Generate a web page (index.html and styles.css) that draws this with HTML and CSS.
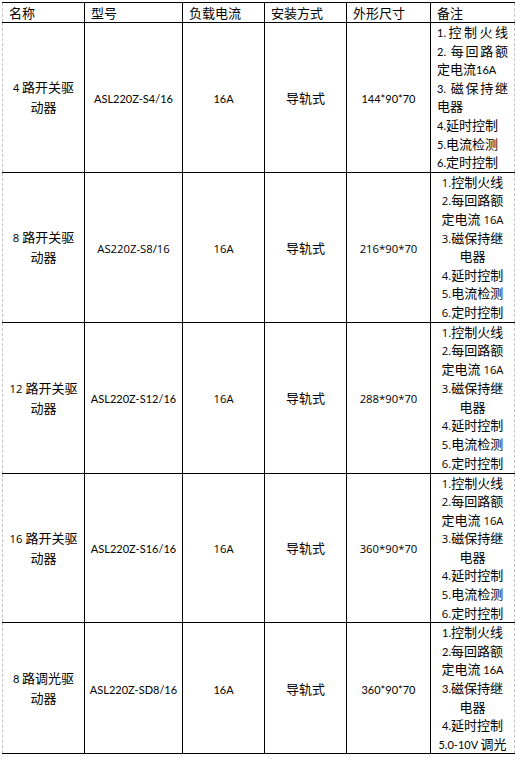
FILE: index.html
```html
<!DOCTYPE html>
<html lang="zh-CN">
<head>
<meta charset="utf-8">
<title>开关驱动器规格</title>
<link rel="stylesheet" href="styles.css">
</head>
<body>
<table class="spec">
  <colgroup>
    <col class="w1"><col class="w2"><col class="w3"><col class="w4"><col class="w5"><col class="w6">
  </colgroup>
  <thead>
    <tr><th>名称</th><th>型号</th><th>负载电流</th><th>安装方式</th><th>外形尺寸</th><th>备注</th></tr>
  </thead>
  <tbody>
    <tr>
      <td class="name"><span class="c">4 </span>路开关驱<br>动器</td>
      <td><span class="c">ASL220Z-S4/16</span></td>
      <td><span class="c">16A</span></td>
      <td>导轨式</td>
      <td><span class="c">144*90*70</span></td>
      <td class="note just">
        <span class="l j"><span class="c">1.</span>控制火线</span>
        <span class="l j"><span class="c">2.</span> 每回路额</span>
        <span class="l">定电流<span class="c">16A</span></span>
        <span class="l j"><span class="c">3.</span> 磁保持继</span>
        <span class="l">电器</span>
        <span class="l"><span class="c">4.</span>延时控制</span>
        <span class="l"><span class="c">5.</span>电流检测</span>
        <span class="l"><span class="c">6.</span>定时控制</span>
      </td>
    </tr>
    <tr>
      <td class="name"><span class="y">8 </span>路开关驱<br>动器</td>
      <td><span class="y">AS220Z-S8/16</span></td>
      <td><span class="y">16A</span></td>
      <td>导轨式</td>
      <td><span class="y">216*90*70</span></td>
      <td class="note">
        <span class="l"><span class="y">1.</span>控制火线</span>
        <span class="l"><span class="y">2.</span>每回路额</span>
        <span class="l">定电流 <span class="y">16A</span></span>
        <span class="l"><span class="y">3.</span>磁保持继</span>
        <span class="l">电器</span>
        <span class="l"><span class="y">4.</span>延时控制</span>
        <span class="l"><span class="y">5.</span>电流检测</span>
        <span class="l"><span class="y">6.</span>定时控制</span>
      </td>
    </tr>
    <tr class="tall">
      <td class="name"><span class="y">12 </span>路开关驱<br>动器</td>
      <td><span class="c">ASL220Z-S12/16</span></td>
      <td><span class="y">16A</span></td>
      <td>导轨式</td>
      <td><span class="y">288*90*70</span></td>
      <td class="note">
        <span class="l"><span class="y">1.</span>控制火线</span>
        <span class="l"><span class="y">2.</span>每回路额</span>
        <span class="l">定电流 <span class="y">16A</span></span>
        <span class="l"><span class="y">3.</span>磁保持继</span>
        <span class="l">电器</span>
        <span class="l"><span class="y">4.</span>延时控制</span>
        <span class="l"><span class="y">5.</span>电流检测</span>
        <span class="l"><span class="y">6.</span>定时控制</span>
      </td>
    </tr>
    <tr>
      <td class="name"><span class="y">16 </span>路开关驱<br>动器</td>
      <td><span class="c">ASL220Z-S16/16</span></td>
      <td><span class="y">16A</span></td>
      <td>导轨式</td>
      <td><span class="y">360*90*70</span></td>
      <td class="note">
        <span class="l"><span class="y">1.</span>控制火线</span>
        <span class="l"><span class="y">2.</span>每回路额</span>
        <span class="l">定电流 <span class="y">16A</span></span>
        <span class="l"><span class="y">3.</span>磁保持继</span>
        <span class="l">电器</span>
        <span class="l"><span class="y">4.</span>延时控制</span>
        <span class="l"><span class="y">5.</span>电流检测</span>
        <span class="l"><span class="y">6.</span>定时控制</span>
      </td>
    </tr>
    <tr>
      <td class="name"><span class="c">8 </span>路调光驱<br>动器</td>
      <td><span class="c">ASL220Z-SD8/16</span></td>
      <td><span class="c">16A</span></td>
      <td>导轨式</td>
      <td><span class="c">360*90*70</span></td>
      <td class="note">
        <span class="l"><span class="c">1.</span>控制火线</span>
        <span class="l"><span class="c">2.</span>每回路额</span>
        <span class="l">定电流 <span class="c">16A</span></span>
        <span class="l"><span class="c">3.</span>磁保持继</span>
        <span class="l">电器</span>
        <span class="l"><span class="c">4.</span>延时控制</span>
        <span class="l"><span class="c">5.0-10V </span>调光</span>
      </td>
    </tr>
  </tbody>
</table>
</body>
</html>
```

FILE: styles.css
```css
html, body {
  margin: 0;
  padding: 0;
  background: #ffffff;
}

.spec {
  border-collapse: collapse;
  table-layout: fixed;
  width: 513px;
  margin: 2px 0 0 2px;
  font-family: "Noto Sans CJK SC", sans-serif;
  font-size: 13px;
  color: #000000;
}

.w1 { width: 82px; }
.w2 { width: 98px; }
.w3 { width: 82px; }
.w4 { width: 82px; }
.w5 { width: 84px; }
.w6 { width: 84px; }

.spec th,
.spec td {
  border: 1px solid #000000;
  padding: 0;
  text-align: center;
  vertical-align: middle;
  font-weight: normal;
}

.spec tr > :first-child {
  border-left: 1px dashed #c4c4c4;
}

.spec tr > :last-child {
  border-right: 1px dashed #c4c4c4;
}

.spec th {
  text-align: left;
  padding-left: 6px;
  line-height: 19px;
}

.name {
  line-height: 20px;
}

.note {
  line-height: 18.6px;
}

.note .l {
  display: block;
  white-space: nowrap;
}

.note.just {
  text-align: left;
  padding: 0 6px;
}

.note.just .j {
  text-align-last: justify;
}

.tall .note {
  line-height: 18.75px;
}

.c,
.y {
  line-height: 1;
}

.c {
  font-family: Lato, sans-serif;
  font-size: 11px;
}

.y {
  font-family: "Open Sans", sans-serif;
  font-size: 11.3px;
}
```
